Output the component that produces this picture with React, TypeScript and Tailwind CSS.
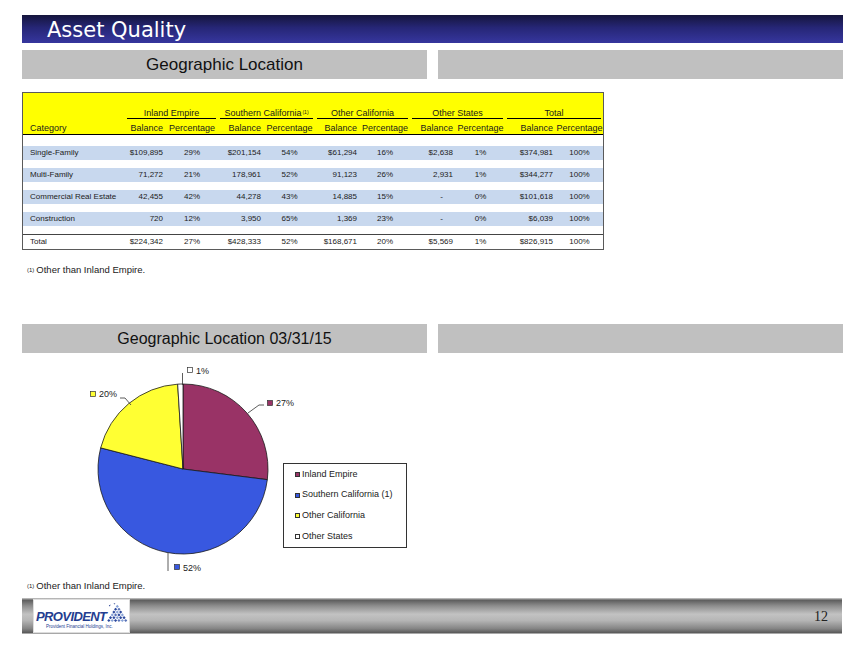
import React from 'react';

const grid = 'grid grid-cols-[102px_41px_52px_46px_51px_45px_50px_46px_49px_51px_47px]';

type Row = { label: string; values: string[] };

const rows: Row[] = [
  { label: 'Single-Family', values: ['$109,895', '29%', '$201,154', '54%', '$61,294', '16%', '$2,638', '1%', '$374,981', '100%'] },
  { label: 'Multi-Family', values: ['71,272', '21%', '178,961', '52%', '91,123', '26%', '2,931', '1%', '$344,277', '100%'] },
  { label: 'Commercial Real Estate', values: ['42,455', '42%', '44,278', '43%', '14,885', '15%', '-', '0%', '$101,618', '100%'] },
  { label: 'Construction', values: ['720', '12%', '3,950', '65%', '1,369', '23%', '-', '0%', '$6,039', '100%'] },
];

const totalRow: Row = {
  label: 'Total',
  values: ['$224,342', '27%', '$428,333', '52%', '$168,671', '20%', '$5,569', '1%', '$826,915', '100%'],
};

const groups = ['Inland Empire', 'Southern California', 'Other California', 'Other States', 'Total'];

const Cells = ({ row }: { row: Row }) => (
  <>
    <div className="pl-[7px] whitespace-nowrap">{row.label}</div>
    {row.values.map((v, i) =>
      i % 2 === 0 ? (
        <div key={i} className={`text-right whitespace-nowrap ${v === '-' ? 'pr-[13px]' : 'pr-[3px]'}`}>{v}</div>
      ) : (
        <div key={i} className="text-center whitespace-nowrap">{v}</div>
      )
    )}
  </>
);

const LoanTable = () => (
  <div className="w-[582px] border border-[#5a5a5a] font-['Liberation_Sans',Arial,sans-serif] text-[#1a1a1a]">
    <div className="bg-[#ffff00]">
      <div className={`${grid} h-[26px] items-end text-[9px] leading-[10px]`}>
        <div />
        {groups.map((g) => (
          <div key={g} className="col-span-2 mx-[2px] border-b border-black text-center whitespace-nowrap">
            {g}
            {g === 'Southern California' && <sup className="text-[5px] ml-[1px]">(1)</sup>}
          </div>
        ))}
      </div>
      <div className={`${grid} h-[16px] items-end border-b border-black pb-[1px] text-[9px] leading-[10px]`}>
        <div className="pl-[7px]">Category</div>
        {groups.map((g) => (
          <React.Fragment key={g}>
            <div className="text-right pr-[3px]">Balance</div>
            <div className="text-center">Percentage</div>
          </React.Fragment>
        ))}
      </div>
    </div>
    <div className="h-[11px]" />
    <div className="flex flex-col gap-[8px] text-[8px] leading-[14px] text-[#222]">
      {rows.map((r) => (
        <div key={r.label} className={`${grid} h-[14px] bg-[#c8d8ee]`}>
          <Cells row={r} />
        </div>
      ))}
    </div>
    <div className={`${grid} mt-[8px] h-[15px] border-t border-[#444] text-[8px] leading-[14px] text-[#222]`}>
      <Cells row={totalRow} />
    </div>
  </div>
);

const Footnote = () => (
  <div className="pl-[5px] text-[9.5px] leading-[12px] text-[#222] font-['Liberation_Sans',Arial,sans-serif]">
    <span className="text-[6px] align-top mr-[2px]">(1)</span>Other than Inland Empire.
  </div>
);

const GrayBars = ({ title, font }: { title: string; font: string }) => (
  <div className="flex gap-[11px]">
    <div className={`w-[405px] h-[29px] bg-[#c0c0c0] flex items-center justify-center text-[#111] ${font}`}>{title}</div>
    <div className="w-[405px] h-[29px] bg-[#c0c0c0]" />
  </div>
);

const slices = [
  { name: 'Inland Empire', color: '#993366', d: 'M183,468 L183,383 A85,85 0 0 1 267.33,478.65 Z' },
  { name: 'Southern California (1)', color: '#3858e0', d: 'M183,468 L267.33,478.65 A85,85 0 1 1 100.67,446.86 Z' },
  { name: 'Other California', color: '#ffff33', d: 'M183,468 L100.67,446.86 A85,85 0 0 1 177.66,383.17 Z' },
  { name: 'Other States', color: '#ffffff', d: 'M183,468 L177.66,383.17 A85,85 0 0 1 183,383 Z' },
];

const PieChart = () => (
  <div className="relative h-[227px]">
    <svg className="absolute inset-0" width="821" height="227" viewBox="22 352 821 227">
      {slices.map((s) => (
        <path key={s.name} d={s.d} fill={s.color} stroke="#1a1a1a" strokeWidth="0.8" strokeLinejoin="round" />
      ))}
      <g stroke="#333" strokeWidth="0.8" fill="none">
        <polyline points="182.5,384 182.5,372" />
        <polyline points="248,412 259,404 264,404" />
        <polyline points="120,397 125,397 131,404" />
        <polyline points="168,552 168,570" />
      </g>
      <g stroke="#333" strokeWidth="0.7">
        <rect x="187.5" y="366.5" width="5" height="5" fill="#ffffff" />
        <rect x="267.5" y="399.5" width="5" height="5" fill="#993366" />
        <rect x="90.5" y="390.5" width="5" height="5" fill="#ffff33" />
        <rect x="174.5" y="563.5" width="5" height="5" fill="#3858e0" />
      </g>
      <g fontFamily="Liberation Sans, Arial, sans-serif" fontSize="9" fill="#222">
        <text x="196" y="372.5">1%</text>
        <text x="276" y="405">27%</text>
        <text x="99" y="396">20%</text>
        <text x="183" y="569.5">52%</text>
      </g>
    </svg>
    <div className="absolute left-[261px] top-[110px] w-[124px] h-[85px] border border-[#333] bg-white flex flex-col font-['Liberation_Sans',Arial,sans-serif] text-[9px] text-[#222]">
      {slices.map((s) => (
        <div key={s.name} className="h-[21px] flex items-center pl-[11px] gap-[2px] whitespace-nowrap">
          <span className="w-[5px] h-[5px] border border-[#333]" style={{ backgroundColor: s.color }} />
          {s.name}
        </div>
      ))}
    </div>
  </div>
);

const Logo = () => {
  const dots: { x: number; y: number; c: string }[] = [];
  for (let r = 0; r < 6; r++) {
    for (let i = 0; i <= r; i++) {
      const c = (r + i) % 3 === 0 ? '#8aa4d8' : (r * i) % 2 === 0 ? '#2d4a9e' : '#5a74b8';
      dots.push({ x: 12 - r * 1.8 + i * 3.6, y: 4 + r * 3, c });
    }
  }
  return (
    <div className="ml-[11px] my-[1px] w-[97px] bg-white flex flex-col justify-center pl-[2px] border border-[#ddd]">
      <div className="flex items-end h-[22px]">
        <span className="font-['Liberation_Sans',Arial,sans-serif] font-bold italic text-[13px] leading-[13px] tracking-[-0.6px] text-[#243d90] mb-[1px]">
          PROVIDENT
        </span>
        <svg width="24" height="22" viewBox="0 0 24 22">
          {dots.map((d, i) => (
            <rect key={i} x={d.x - 1.2} y={d.y - 1.2} width="2.4" height="2.4" fill={d.c} transform={`rotate(45 ${d.x} ${d.y})`} />
          ))}
          <path d="M3 3 l2 -1 l-1 2 z M8 1 l2 -0.5 l-1 1.5 z" fill="#243d90" />
        </svg>
      </div>
      <div className="font-['Liberation_Sans',Arial,sans-serif] text-[4.5px] leading-[6px] text-[#243d90] pl-[10px] whitespace-nowrap">
        Provident Financial Holdings, Inc.
      </div>
    </div>
  );
};

export default function App() {
  return (
    <div className="w-[864px] h-[648px] bg-white overflow-hidden pl-[22px] pt-[15px]">
      <div className="w-[821px] h-[28px] bg-[linear-gradient(to_bottom,#15153c,#262676_45%,#36369e)] pl-[25px] flex items-center">
        <span className="font-['DejaVu_Sans',Verdana,sans-serif] text-[21px] leading-[28px] text-white mt-[2px]">Asset Quality</span>
      </div>
      <div className="mt-[7px]">
        <GrayBars title="Geographic Location" font="font-['Liberation_Sans',Arial,sans-serif] text-[17px]" />
      </div>
      <div className="mt-[13px]">
        <LoanTable />
      </div>
      <div className="mt-[14px]">
        <Footnote />
      </div>
      <div className="mt-[48px]">
        <GrayBars title="Geographic Location 03/31/15" font="font-['Liberation_Sans',Arial,sans-serif] text-[16px]" />
      </div>
      <PieChart />
      <Footnote />
      <div className="mt-[6px] w-[820px] h-[36px] flex items-stretch justify-between bg-[linear-gradient(to_bottom,#d0d0d0_0%,#5e5e5e_6%,#8e8e8e_22%,#c2c2c2_45%,#b6b6b6_62%,#858585_85%,#5c5c5c_96%,#d0d0d0_100%)]">
        <Logo />
        <div className="flex items-center pr-[14px] font-['Liberation_Serif','Times_New_Roman',serif] text-[14px] text-[#222]">12</div>
      </div>
    </div>
  );
}
